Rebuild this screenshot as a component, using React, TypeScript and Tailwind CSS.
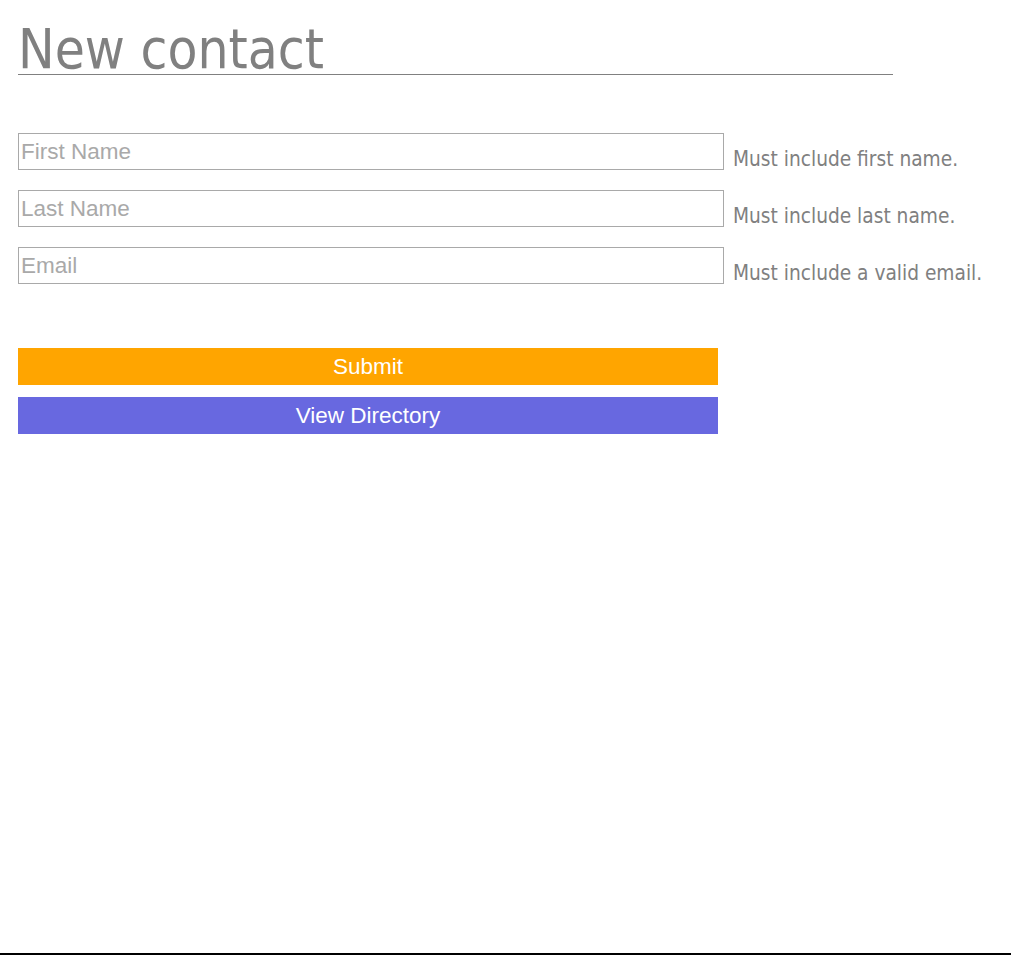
import React from "react";

const fields = [
  { ph: "First Name", msg: "Must include first name.", type: "text" },
  { ph: "Last Name", msg: "Must include last name.", type: "text" },
  { ph: "Email", msg: "Must include a valid email.", type: "email" },
];

export default function App() {
  return (
    <div className="h-[955px] box-border border-b-2 border-black bg-white overflow-hidden px-[18px]">
      <h1 className="box-border h-[75px] w-[875px] border-b border-[#808080] pt-[21px] text-[54.5px] leading-[56px] font-normal text-[#808080] font-['DejaVu_Sans_Condensed','DejaVu_Sans',sans-serif]">
        New contact
      </h1>

      <form className="mt-[58px] flex flex-col gap-[20px]" onSubmit={(e) => e.preventDefault()}>
        {fields.map((f) => (
          <div key={f.ph} className="flex items-end">
            <input
              type={f.type}
              placeholder={f.ph}
              className="box-border h-[37px] w-[706px] border border-[#a9a9a9] bg-white px-[2px] text-[22.5px] text-[#555] placeholder:text-[#a9a9a9] outline-none font-['Liberation_Sans',Arial,sans-serif]"
            />
            <span className="ml-[9px] mb-[-5px] text-[20.7px] leading-normal text-[#808080] whitespace-nowrap font-['DejaVu_Sans_Condensed','DejaVu_Sans',sans-serif]">
              {f.msg}
            </span>
          </div>
        ))}

        <div className="mt-[44px] flex flex-col gap-[12px]">
          <button
            type="submit"
            className="h-[37px] w-[700px] bg-[#ffa500] text-[22.5px] text-white font-['Liberation_Sans',Arial,sans-serif]"
          >
            Submit
          </button>
          <button
            type="button"
            className="h-[37px] w-[700px] bg-[#6868e0] text-[22.5px] text-white font-['Liberation_Sans',Arial,sans-serif]"
          >
            View Directory
          </button>
        </div>
      </form>
    </div>
  );
}
